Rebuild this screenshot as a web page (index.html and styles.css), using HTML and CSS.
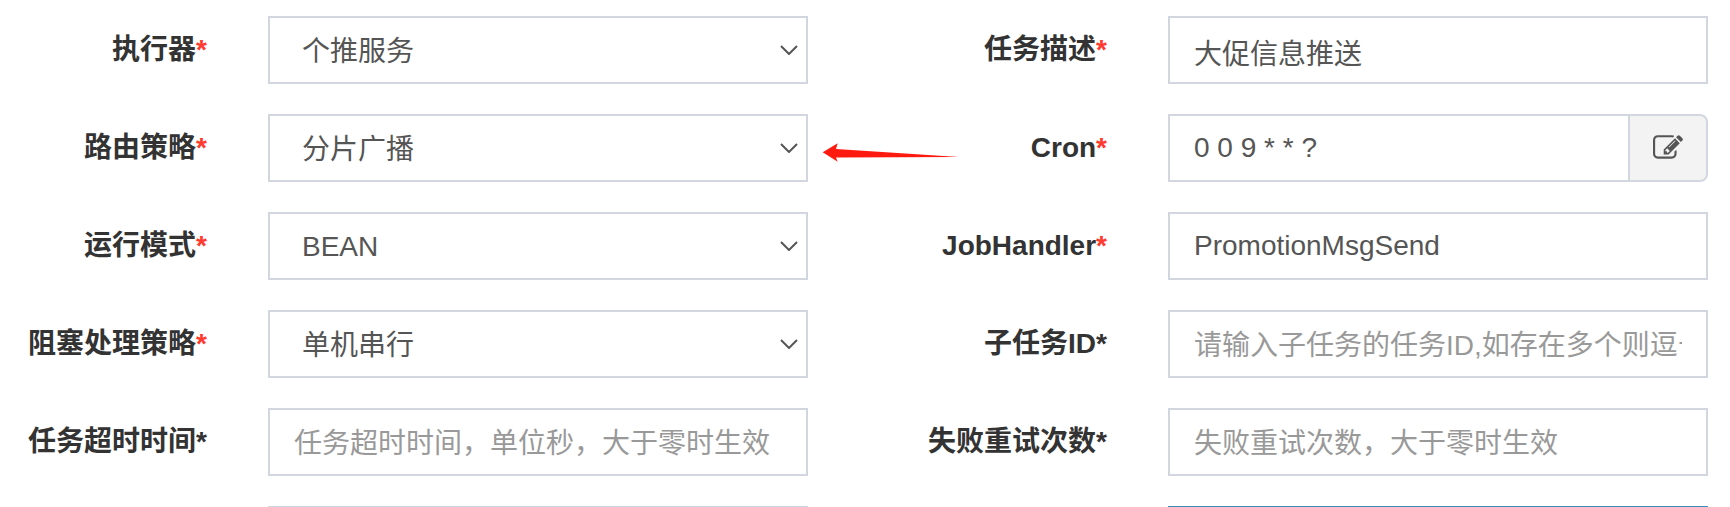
FILE: index.html
```html
<!DOCTYPE html>
<html lang="zh-CN">
  <head>
    <meta charset="UTF-8" />
    <meta name="viewport" content="width=device-width, initial-scale=1.0" />
    <title>任务配置</title>
    <link rel="stylesheet" href="styles.css">
  </head>
  <body>
    <form class="job-form">
      <label class="form-label">执行器<span class="required">*</span></label>
      <div class="select-box">
        <select class="form-control form-select form-control--cjk"><option>个推服务</option></select>
        <svg class="select-arrow" width="18" height="10" viewBox="0 0 18 10"><path d="M1 1L9 9L17 1" /></svg>
      </div>
      <label class="form-label">任务描述<span class="required">*</span></label>
      <input class="form-control form-control--cjk" type="text" value="大促信息推送" />

      <label class="form-label">路由策略<span class="required">*</span></label>
      <div class="select-box">
        <select class="form-control form-select form-control--cjk"><option>分片广播</option></select>
        <svg class="select-arrow" width="18" height="10" viewBox="0 0 18 10"><path d="M1 1L9 9L17 1" /></svg>
      </div>
      <label class="form-label">Cron<span class="required">*</span></label>
      <div class="input-group">
        <input class="form-control input-group-field" type="text" value="0 0 9 * * ?" />
        <span class="input-group-addon">
          <svg width="30" height="30" viewBox="0 0 1792 1792">
            <path d="M888 1184l116-116-152-152-116 116v56h96v96h56zm440-720q-16-16-33 1l-350 350q-17 17-1 33t33-1l350-350q17-17 1-33zm80 594v190q0 119-84.5 203.5t-203.5 84.5h-832q-119 0-203.5-84.5t-84.5-203.5v-832q0-119 84.5-203.5t203.5-84.5h832q63 0 117 25 15 7 18 23 3 17-9 29l-49 49q-14 14-32 8-23-6-45-6h-832q-66 0-113 47t-47 113v832q0 66 47 113t113 47h832q66 0 113-47t47-113v-126q0-13 9-22l64-64q15-15 35-7t20 29zm-96-738l288 288-672 672h-288v-288zm444 132l-92 92-288-288 92-92q28-28 68-28t68 28l152 152q28 28 28 68t-28 68z" />
          </svg>
        </span>
      </div>

      <label class="form-label">运行模式<span class="required">*</span></label>
      <div class="select-box">
        <select class="form-control form-select"><option>BEAN</option></select>
        <svg class="select-arrow" width="18" height="10" viewBox="0 0 18 10"><path d="M1 1L9 9L17 1" /></svg>
      </div>
      <label class="form-label">JobHandler<span class="required">*</span></label>
      <input class="form-control" type="text" value="PromotionMsgSend" />

      <label class="form-label">阻塞处理策略<span class="required">*</span></label>
      <div class="select-box">
        <select class="form-control form-select form-control--cjk"><option>单机串行</option></select>
        <svg class="select-arrow" width="18" height="10" viewBox="0 0 18 10"><path d="M1 1L9 9L17 1" /></svg>
      </div>
      <label class="form-label">子任务ID*</label>
      <input class="form-control form-control--cjk" type="text" placeholder="请输入子任务的任务ID,如存在多个则逗号分隔" />

      <label class="form-label">任务超时时间*</label>
      <input class="form-control form-control--cjk" type="text" placeholder="任务超时时间，单位秒，大于零时生效" />
      <label class="form-label">失败重试次数*</label>
      <input class="form-control form-control--cjk" type="text" placeholder="失败重试次数，大于零时生效" />

      <label class="form-label"></label>
      <input class="form-control" type="text" />
      <label class="form-label"></label>
      <input class="form-control form-control--focus" type="text" />
    </form>

    <!-- 标注箭头 -->
    <svg class="note-arrow" width="140" height="24" viewBox="0 0 140 24">
      <path d="M0.7 11.3L15.7 2.3L14 8L137 16L14 16.5L15.7 20.7Z" />
    </svg>
  </body>
</html>
```

FILE: styles.css
```css
html,
body {
  height: 507px;
  margin: 0;
  overflow: hidden;
  background-color: #fff;
}

body {
  position: relative;
  font-family: "Liberation Sans", "Noto Sans CJK SC", sans-serif;
  font-size: 28px;
  color: #333;
}

/* 两列表单，最后一行被窗口裁掉 */
.job-form {
  display: grid;
  grid-template-columns: 268px 540px 360px 540px;
  grid-auto-rows: 68px;
  row-gap: 30px;
  height: 491px;
  padding-top: 16px;
  overflow: hidden;
}

.form-label {
  padding-right: 61px;
  font-weight: 700;
  line-height: 68px;
  text-align: right;
}

.required {
  color: #ff3b30;
}

.form-control {
  box-sizing: border-box;
  width: 100%;
  height: 68px;
  padding: 0 24px;
  border: 2px solid #d2d6de;
  border-radius: 0;
  outline: none;
  background-color: #fff;
  font-family: inherit;
  font-size: 28px;
  color: #555;
}

.form-control--cjk {
  padding-top: 3px;
}

.form-control::placeholder {
  color: #999;
  opacity: 1;
}

.form-control--focus {
  border-color: #3c8dbc;
}

/* 下拉框 */
.select-box {
  position: relative;
}

.form-select {
  padding-left: 32px;
  appearance: none;
}

.select-arrow {
  position: absolute;
  top: 29px;
  right: 10px;
  fill: none;
  stroke: #555;
  stroke-width: 2;
}

/* Cron 输入框 */
.input-group {
  display: flex;
}

.input-group-field {
  flex: 1;
  min-width: 0;
}

.input-group-addon {
  display: flex;
  align-items: center;
  justify-content: center;
  box-sizing: border-box;
  width: 78px;
  border: 2px solid #d2d6de;
  border-left: 0;
  border-radius: 0 8px 8px 0;
  background-color: #f3f3f3;
}

.input-group-addon svg {
  fill: #555;
}

.note-arrow {
  position: absolute;
  top: 141px;
  left: 822px;
  fill: #ff1a10;
}
```
